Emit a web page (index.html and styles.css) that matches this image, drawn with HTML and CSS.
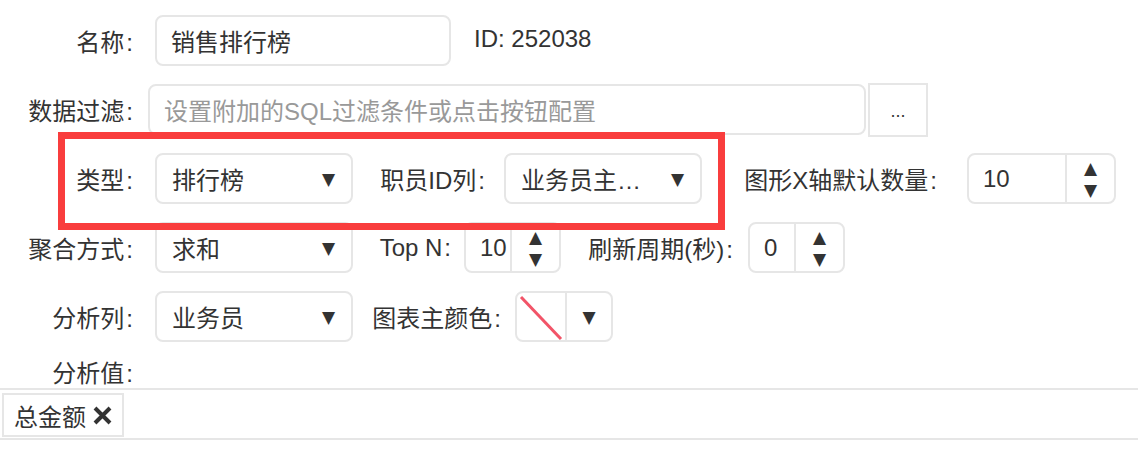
FILE: index.html
```html
<!DOCTYPE html>
<html lang="zh-CN">
<head>
  <meta charset="UTF-8">
  <title>销售排行榜 - 设置</title>
  <link rel="stylesheet" href="styles.css">
</head>
<body>

  <div class="form">

    <div class="row">
      <label class="label">名称&#8202;:</label>
      <div class="input name-input">销售排行榜</div>
      <span class="id-text">ID: 252038</span>
    </div>

    <div class="row">
      <label class="label">数据过滤&#8202;:</label>
      <div class="input filter-input placeholder">设置附加的SQL过滤条件或点击按钮配置</div>
      <button class="dots-btn">...</button>
    </div>

    <div class="row">
      <label class="label">类型&#8202;:</label>
      <div class="select"><span>排行榜</span><span class="caret">&#9660;</span></div>
      <label class="inline-label w-emp">职员ID列&#8202;:</label>
      <div class="select"><span>业务员主…</span><span class="caret">&#9660;</span></div>
      <label class="inline-label w-axis">图形X轴默认数量&#8202;:</label>
      <div class="spinner big">
        <span class="spin-value">10</span>
        <span class="spin-btns"><i>&#9650;</i><i>&#9660;</i></span>
      </div>
    </div>

    <div class="row">
      <label class="label">聚合方式&#8202;:</label>
      <div class="select"><span>求和</span><span class="caret">&#9660;</span></div>
      <label class="inline-label w-top">Top N&#8202;:</label>
      <div class="spinner">
        <span class="spin-value">10</span>
        <span class="spin-btns"><i>&#9650;</i><i>&#9660;</i></span>
      </div>
      <label class="inline-label w-refresh">刷新周期(秒)&#8202;:</label>
      <div class="spinner">
        <span class="spin-value">0</span>
        <span class="spin-btns"><i>&#9650;</i><i>&#9660;</i></span>
      </div>
    </div>

    <div class="row">
      <label class="label">分析列&#8202;:</label>
      <div class="select"><span>业务员</span><span class="caret">&#9660;</span></div>
      <label class="inline-label w-color">图表主颜色&#8202;:</label>
      <div class="color-picker">
        <span class="swatch">
          <svg width="48" height="48" viewBox="0 0 48 48"><line x1="4" y1="4" x2="44" y2="46" stroke="#f25468" stroke-width="3"/></svg>
        </span>
        <span class="color-caret">&#9660;</span>
      </div>
    </div>

    <div class="row value-row">
      <label class="label">分析值&#8202;:</label>
    </div>

    <div class="tag-box">
      <span class="tag"><span>总金额</span><svg class="tag-close" width="19" height="19" viewBox="0 0 19 19"><path d="M2 2 L17 17 M17 2 L2 17" stroke="#333" stroke-width="4"/></svg></span>
    </div>

    <div class="highlight"></div>
  </div>

</body>
</html>
```

FILE: styles.css
```css
body {
  margin: 0;
  background-color: white;
  color: #333;
  font-family: "Liberation Sans", "Noto Sans CJK SC", sans-serif;
  font-size: 24px;
}
.form {
  position: relative;
  padding-top: 15px;
}
.row {
  display: flex;
  align-items: center;
  height: 51px;
  margin-bottom: 18px;
}
.label {
  width: 133px;
  text-align: right;
  margin-right: 22px;
  flex-shrink: 0;
  white-space: nowrap;
}
.input {
  box-sizing: border-box;
  height: 51px;
  border: 2px solid #e6e6e6;
  border-radius: 8px;
  padding: 0 14px;
  display: flex;
  align-items: center;
}
.name-input {
  width: 296px;
}
.id-text {
  margin-left: 23px;
  margin-top: -4px;
}
.filter-input {
  width: 718px;
  margin-left: -7px;
}
.placeholder {
  color: #999;
}
.dots-btn {
  box-sizing: border-box;
  width: 60px;
  height: 54px;
  margin-left: 2px;
  background: white;
  border: 2px solid #e6e6e6;
  border-radius: 0;
  color: #333;
  font-family: inherit;
  font-size: 18px;
  padding-top: 4px;
}
.select {
  box-sizing: border-box;
  width: 198px;
  height: 51px;
  border: 2px solid #e6e6e6;
  border-radius: 8px;
  padding: 0 16px 0 15px;
  display: flex;
  align-items: center;
  justify-content: space-between;
}
.caret {
  font-size: 17px;
  font-family: "DejaVu Sans", sans-serif;
}
.inline-label {
  box-sizing: border-box;
  text-align: right;
  flex-shrink: 0;
  white-space: nowrap;
}
.w-emp {
  width: 151px;
  padding-right: 19px;
}
.w-axis {
  width: 265px;
  padding-right: 30px;
}
.w-top {
  width: 111px;
  padding-right: 13px;
}
.w-refresh {
  width: 187px;
  padding-right: 15px;
}
.w-color {
  width: 162px;
  padding-right: 14px;
}
.spinner {
  box-sizing: border-box;
  height: 51px;
  width: 97px;
  border: 2px solid #e6e6e6;
  border-radius: 8px;
  display: flex;
}
.spinner.big {
  width: 149px;
}
.spin-value {
  flex: 1;
  display: flex;
  align-items: center;
  padding-left: 14px;
  border-right: 2px solid #e6e6e6;
}
.spin-btns {
  width: 47px;
  display: flex;
  flex-direction: column;
  align-items: center;
  justify-content: center;
  font-size: 17px;
  line-height: 22px;
  font-family: "DejaVu Sans", sans-serif;
}
.spin-btns i {
  font-style: normal;
}
.color-picker {
  box-sizing: border-box;
  width: 98px;
  height: 51px;
  border: 2px solid #e6e6e6;
  border-radius: 8px;
  display: flex;
  overflow: hidden;
}
.swatch {
  width: 48px;
  border-right: 2px solid #e6e6e6;
}
.swatch svg {
  display: block;
}
.color-caret {
  flex: 1;
  display: flex;
  align-items: center;
  justify-content: center;
  font-size: 17px;
  font-family: "DejaVu Sans", sans-serif;
}
.value-row {
  height: 38px;
  margin-bottom: 0;
  margin-top: -10px;
  align-items: flex-end;
}
.value-row .label {
  line-height: 28px;
}
.tag-box {
  border-top: 2px solid #e6e6e6;
  border-bottom: 2px solid #e6e6e6;
  padding: 3px 2px 1px;
}
.tag {
  box-sizing: border-box;
  display: inline-flex;
  align-items: center;
  height: 44px;
  padding: 0 10px;
  border: 2px solid #e6e6e6;
  white-space: nowrap;
}
.tag-close {
  margin-left: 7px;
  flex-shrink: 0;
}
.highlight {
  position: absolute;
  left: 58px;
  top: 132px;
  width: 667px;
  height: 98px;
  box-sizing: border-box;
  border: 7px solid #f93d3d;
}
```
